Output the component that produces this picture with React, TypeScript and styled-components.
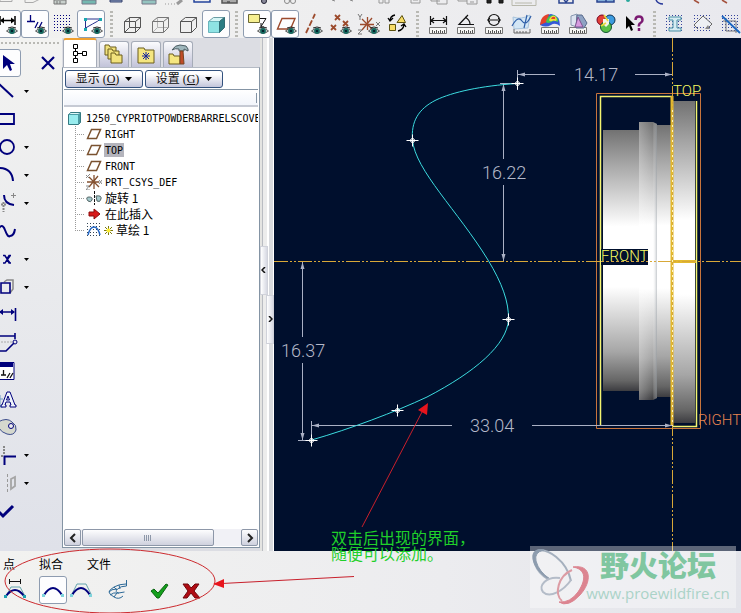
import React from 'react';
import styled, { createGlobalStyle, css } from 'styled-components';

const CJK = '"Noto Sans CJK SC", sans-serif';
const NAVY = '#000f2d';
const INK = '#00007c';

const GlobalStyle = createGlobalStyle`
  * { box-sizing: border-box; }
  body { margin: 0; font: 12px/16px "Liberation Sans", ${CJK}; color: #111; }
  button { font: inherit; color: inherit; margin: 0; padding: 0; border: 0; background: none; }
  svg { display: block; flex: none; }
`;

/* ---------- layout ---------- */

const Page = styled.div`
  position: relative;
  display: grid;
  grid-template-rows: auto 1fr auto;
  min-height: 100vh;
  overflow: hidden;
  background: #ededee;
`;

const Toolbars = styled.header`
  background: linear-gradient(90deg, #f2f2f0, #e9e9ee);
  overflow: hidden;
`;

const ClippedBar = styled.div`
  display: flex;
  align-items: flex-end;
  height: 6px;
  margin: 0 -9px 4px;
  overflow: hidden;
`;

const IconBar = styled.div`
  display: flex;
  height: 28px;
  margin-left: -7px;
`;

const IconButton = styled.button<{ $pressed?: boolean; $before?: number }>`
  display: flex;
  flex: none;
  align-items: center;
  justify-content: center;
  width: 28px;
  height: 28px;
  margin-left: ${(p) => p.$before || 0}px;
  border: 1px solid transparent;
  border-radius: 3px;
  ${(p) =>
    p.$pressed &&
    css`
      border-color: #8e9cb0;
      background: #fdfdfe;
    `}
`;

const Separator = styled.span`
  flex: none;
  width: 3px;
  height: 26px;
  margin: 1px 5px;
  background: repeating-linear-gradient(#b9b9b4 0 2px, transparent 2px 4px);
`;

const StubButton = styled.button<{ $before?: number }>`
  flex: none;
  width: 28px;
  height: 6px;
  margin-left: ${(p) => p.$before || 0}px;
`;

const Workspace = styled.main`
  display: flex;
  min-height: 0;
`;

const SketchTools = styled.nav`
  display: flex;
  flex: none;
  flex-direction: column;
  width: 62px;
  overflow: hidden;
  padding-top: 4px;
  background: linear-gradient(#f3f3f1, #dfe1e9);
`;

const Grip = styled.span`
  height: 2px;
  margin: 0 1px 5px;
  background: repeating-linear-gradient(90deg, #b9b9b4 0 2px, transparent 2px 4px);
`;

const ToolRow = styled.div`
  display: flex;
  align-items: center;
  height: 28px;
  margin-left: -7px;
`;

const FlyoutButton = styled.button`
  width: 11px;
  height: 28px;
  display: flex;
  align-items: center;
  justify-content: center;
`;

const CloseButton = styled(IconButton)`
  margin-left: 13px;
`;

const Navigator = styled.aside`
  display: flex;
  flex: none;
  flex-direction: column;
  width: 198px;
  padding: 0 0 3px;
  background: #dcdde3;
`;

const TabList = styled.div`
  display: flex;
  align-items: flex-end;
  gap: 2px;
  height: 29px;
  padding-left: 1px;
`;

const Tab = styled.button<{ $active?: boolean }>`
  display: flex;
  align-items: center;
  justify-content: center;
  width: ${(p) => (p.$active ? 34 : 30)}px;
  height: ${(p) => (p.$active ? 29 : 26)}px;
  border: 1px solid #a6acb8;
  border-bottom: 0;
  border-top: ${(p) => (p.$active ? '2px solid #f0a030' : '1px solid #a6acb8')};
  border-radius: 3px 3px 0 0;
  background: ${(p) => (p.$active ? '#fff' : 'linear-gradient(#fbfbfd, #c2c3d9)')};
`;

const TreePanel = styled.section`
  display: flex;
  flex: 1;
  flex-direction: column;
  min-height: 0;
  border: 1px solid #8494a4;
  border-top-color: #b4bac4;
  padding: 2px 1px 1px;
  background: #fff;
`;

const MenuRow = styled.div`
  display: flex;
  gap: 2px;
  padding: 0 1px 1px;
`;

const MenuButton = styled.button`
  display: flex;
  align-items: center;
  justify-content: center;
  gap: 6px;
  width: 78px;
  height: 18px;
  border: 1px solid #33527e;
  border-radius: 3px;
  background: linear-gradient(#fff 20%, #c3c5db);
  font-family: "Liberation Serif", ${CJK};
  line-height: 14px;
`;

const ColumnHeader = styled.div`
  display: flex;
  justify-content: flex-end;
  height: 18px;
  padding: 3px 1px 2px;
  border-top: 1px solid #8494a4;
  border-bottom: 2px solid #c6cad4;
  background: linear-gradient(#fff, #f2f5fb);
`;

const ColumnGrip = styled.span`
  width: 1px;
  background: #8494a4;
`;

const Tree = styled.div`
  flex: 1;
  padding: 3px 0 0 2px;
  overflow: hidden;
  white-space: nowrap;
`;

const TreeRoot = styled.div`
  display: flex;
  align-items: center;
  gap: 3px;
  height: 16px;
`;

const Branches = styled.ul`
  margin: 0 0 0 9px;
  padding: 0;
  list-style: none;
`;

const dotsV = 'repeating-linear-gradient(#9a9a9a 0 1px, transparent 1px 2px)';
const dotsH = 'repeating-linear-gradient(90deg, #9a9a9a 0 1px, transparent 1px 2px)';

const Branch = styled.li`
  display: flex;
  align-items: center;
  gap: 2px;
  height: 16px;
  padding-left: 11px;
  background: ${dotsV} 0 0 / 1px 100% no-repeat, ${dotsH} 0 8px / 10px 1px no-repeat;
  &:last-child {
    background: ${dotsV} 0 0 / 1px 50% no-repeat, ${dotsH} 0 8px / 10px 1px no-repeat;
  }
`;

const NodeName = styled.span<{ $selected?: boolean; $latin?: boolean }>`
  padding: ${(p) => (p.$latin ? '1px 1px 0' : '0 1px')};
  line-height: ${(p) => (p.$latin ? 13 : 14)}px;
  font-family: ${(p) => (p.$latin ? '"DejaVu Sans Mono", monospace' : CJK)};
  font-size: ${(p) => (p.$latin ? 10 : 12)}px;
  color: #000;
  background: ${(p) => (p.$selected ? '#b4b4bc' : 'none')};
`;

const ScrollBar = styled.div`
  display: flex;
  gap: 1px;
  height: 17px;
  background: #f1f1f6;
`;

const ScrollArrow = styled.button`
  display: flex;
  align-items: center;
  justify-content: center;
  width: 17px;
  border: 1px solid #8d97a8;
  border-radius: 2px;
  background: linear-gradient(#fdfdfe, #cfd1de);
`;

const ScrollThumb = styled.div`
  display: flex;
  align-items: center;
  justify-content: center;
  width: 132px;
  margin-right: auto;
  border: 1px solid #8d97a8;
  border-radius: 2px;
  background: linear-gradient(#fdfdfe, #cfd1de);
`;

const ThumbGrip = styled.span`
  width: 8px;
  height: 6px;
  background: repeating-linear-gradient(90deg, #8d97a8 0 1px, transparent 1px 2px);
`;

const Splitter = styled.div`
  display: flex;
  flex: none;
  flex-direction: column;
  justify-content: center;
  width: 14px;
  background: linear-gradient(90deg, #e4e4e2 0 2px, #b9bcc2 2px 3px, #ececec 3px 7px, #fff 7px 9px, #d8dade 9px 13px, #fff 13px);
`;

const CollapseButton = styled.button<{ $side: 'left' | 'right' }>`
  display: flex;
  align-items: center;
  justify-content: center;
  align-self: ${(p) => (p.$side === 'left' ? 'flex-start' : 'flex-end')};
  width: 8px;
  height: 49px;
  border: 1px solid #d0d2da;
  background: linear-gradient(90deg, #fff, #d6d8e2);
`;

const Viewport = styled.section`
  flex: 1;
  min-width: 0;
  background: ${NAVY};
  > svg { width: 100%; height: 100%; }
`;

const Dashboard = styled.footer`
  height: 62px;
  padding-top: 5px;
  background: linear-gradient(90deg, #f2f2f0, #ececef 60%, #e3e4ea);
`;

const Labels = styled.div`
  display: flex;
  gap: 24px;
  padding: 0 0 4px 3px;
  button { line-height: 16px; font-family: ${CJK}; color: #000; }
`;

const Commands = styled.div`
  display: flex;
`;

const Markup = styled.svg`
  position: absolute;
  left: 0;
  bottom: 0;
  pointer-events: none;
`;

const Note = styled.p`
  position: absolute;
  left: 331px;
  bottom: 52px;
  margin: 0;
  font: 16px/16px ${CJK};
  color: #1fd02a;
`;

const Watermark = styled.div`
  position: absolute;
  right: 5px;
  bottom: 5px;
  display: flex;
  width: 206px;
  height: 62px;
  background: rgba(255, 255, 255, 0.36);
`;

const WatermarkText = styled.div`
  flex: 1;
  margin-left: -6px;
  padding: 1px 4px 0 0;
  text-align: center;
  white-space: nowrap;
`;

const ForumName = styled.div`
  font: 900 29px/34px ${CJK};
  color: #80c6a0;
`;

const ForumLink = styled.a`
  display: block;
  font: 15px/24px "Open Sans", sans-serif;
  color: #abd3c8;
  text-decoration: none;
`;

/* ---------- icon parts ---------- */

const Icon = ({ children, size = 24 }: { children: React.ReactNode; size?: number }) => (
  <svg width={size} height={size} viewBox={`0 0 ${size} ${size}`} fill="none" aria-hidden="true">
    {children}
  </svg>
);

const Eye = ({ x = 18, y = 19 }) => (
  <g transform={`translate(${x} ${y})`}>
    <path d="M-5.500 0Q0-5 5.500 0Q0 4.500-5.500 0Z" fill="#cfd8d6" stroke="#333" strokeWidth=".8" />
    <circle r="2.900" fill="#15695f" />
    <circle r="1.100" fill="#012" />
    <path d="M-4-3Q0-5 4-3" stroke="#222" />
  </g>
);

const Ruler = () => (
  <g>
    <path d="M3.500 15.500h17v6h-17z" fill="#f8f8f6" stroke="#777" />
    <path d="M6.500 21v-3M8.500 21v-2M10.500 21v-3M12.500 21v-2M14.500 21v-3M16.500 21v-2M18.500 21v-3" stroke="#555" />
  </g>
);

const Dots = ({ step = 3, color = INK, from = 3, to = 20 }) => {
  const rows: number[] = [];
  for (let v = from; v <= to; v += step) rows.push(v);
  return (
    <g stroke={color} strokeDasharray={`1 ${step - 1}`}>
      {rows.map((v) => (
        <path key={v} d={`M${from} ${v + 0.5}H${to}`} />
      ))}
    </g>
  );
};

const Cross = ({ x, y, c = '#9c4a2c' }: { x: number; y: number; c?: string }) => (
  <path d={`M${x - 2} ${y - 2}l5 5m0-5l-5 5`} stroke={c} strokeWidth="1.800" />
);

const Down = () => (
  <svg width="7" height="4" viewBox="0 0 7 4" aria-hidden="true">
    <path d="M0 0h7L3.500 4z" fill="#000" />
  </svg>
);

const folder = 'M0 1h4l1 2h6v8H0z';

const I = {
  dims: (
    <Icon>
      <path d="M5 4v9M20 4v9M6 8.500h13" stroke="#000" strokeWidth="1.500" />
      <path d="M5 8.500l4-3v6zM20 8.500l-4-3v6z" fill="#000" />
      <Eye x={17} />
    </Icon>
  ),
  constraints: (
    <Icon>
      <path d="M4 9.500h8M7.500 3v6M12 16l3-6M16 16l3-6" stroke={INK} strokeWidth="1.300" />
      <Eye />
    </Icon>
  ),
  grid: (
    <Icon>
      <Dots />
      <Eye x={17} />
    </Icon>
  ),
  vertices: (
    <Icon>
      <path d="M6.500 7v9l7-4q6-3 8-5z" stroke="#26308c" />
      <path d="M5 6h3v3H5zM20 6h3v3h-3zM5 16h3v3H5z" fill="#1ba8b0" />
      <Eye />
    </Icon>
  ),
  wire: (
    <Icon>
      <path d="M4.500 9.500h11v11h-11zM9.500 5.500h11v10h-11zM4.500 9.500l5-4M15.500 9.500l5-4M4.500 20.500l5-5M15.500 20.500l5-5" stroke="#555" />
    </Icon>
  ),
  hidden: (
    <Icon>
      <path d="M9.500 5.500v10h11M4.500 20.500l5-5" stroke="#b5b5b5" />
      <path d="M4.500 9.500h11v11h-11zM4.500 9.500l5-4h11v10l-5 5M15.500 9.500l5-4" stroke="#777" />
    </Icon>
  ),
  noHidden: (
    <Icon>
      <path d="M4.500 9.500h11v11h-11zM4.500 9.500l5-4h11v10l-5 5M15.500 9.500l5-4" stroke="#555" />
    </Icon>
  ),
  shaded: (
    <Icon>
      <path d="M4.500 9.500l5-4h11l-5 4z" fill="#d5f5f5" stroke="#6a9ca4" />
      <path d="M4.500 9.500h11v11h-11z" fill="#8fe3e4" stroke="#6ab5bc" />
      <path d="M15.500 9.500l5-4v10l-5 5z" fill="#2b7d84" stroke="#316c74" />
    </Icon>
  ),
  noteDisplay: (
    <Icon>
      <path d="M3.500 2.500h11v8h-11z" fill="#f6ef90" stroke="#6c6834" />
      <path d="M15 6.500h6l-5 8M16 11v4h3" stroke="#111" />
      <Eye />
    </Icon>
  ),
  plane: (
    <Icon>
      <path d="M4.500 17L9 6.500h13L17.500 17z" stroke="#9c4a2c" strokeWidth="1.400" />
      <Eye />
    </Icon>
  ),
  axis: (
    <Icon>
      <path d="M5 21L14 2" stroke="#9c4a2c" strokeWidth="1.800" strokeDasharray="6 2" />
      <Eye x={16} />
    </Icon>
  ),
  points: (
    <Icon>
      <Cross x={8} y={5} />
      <Cross x={4} y={15} />
      <Cross x={16} y={11} />
      <Eye x={17} />
    </Icon>
  ),
  csys: (
    <Icon>
      <path d="M10.500 5v13M3 12.500h14M5 7l12 12M15 6L5 18" stroke="#9c4a2c" strokeWidth="1.300" />
      <path d="M1 2l2 3 2-3M3 5v3M19 10l4 4M23 10l-4 4M1 18h4l-4 4h4" stroke="#777" />
      <Eye x={17} />
    </Icon>
  ),
  rearrange: (
    <Icon>
      <path d="M12 10.500l5-7 3.500 7z" fill="#f7dc66" stroke="#5c5210" />
      <path d="M4.500 12.500h6v6h-6z" fill="#f7dc66" stroke="#5c5210" />
      <path d="M10 3Q5 4 5 9M3 6l2 3 3-3M13 19q5-1 6-6M16 14l3-2 2 3" stroke="#000" strokeWidth="1.300" />
    </Icon>
  ),
  distance: (
    <Icon>
      <path d="M4.500 4v9M20.500 4v9M5 8.500h15M8 6L5 8.500 8 11M17 6l3 2.500-3 2.500" stroke="#111" strokeWidth="1.200" />
      <Ruler />
    </Icon>
  ),
  angle: (
    <Icon>
      <path d="M14 3L5 12.500h15M11 5q5 3 5 7" stroke="#111" strokeWidth="1.200" />
      <Ruler />
    </Icon>
  ),
  diameter: (
    <Icon>
      <circle cx="12" cy="8" r="5.500" stroke="#111" strokeWidth="1.200" />
      <path d="M5 8h14M8 6L6 8l2 2M16 6l2 2-2 2" stroke="#111" />
      <Ruler />
    </Icon>
  ),
  curvature: (
    <Icon>
      <path d="M3 5q8 3 17-2l-2 13-14 1z" fill="#d3e6f5" stroke="#a9c4dc" />
      <path d="M2 14Q8 3 12 9t9-5M17 3l-3 13" stroke="#2f5fa8" strokeWidth="1.200" />
      <path d="M4 17v4h16v-4M7 21v-2M10 21v-2M13 21v-2M16 21v-2" stroke="#666" />
    </Icon>
  ),
  surface: (
    <Icon>
      <Ruler />
      <path d="M2 13Q4 3 13 2q9 1 9 12-5-4-9-1-5 3-11 0z" fill="#3558d8" />
      <path d="M3 8q2-5 8-6l-2 8-7 3z" fill="#e5432b" />
      <path d="M8 10q1-7 8-7 5 3 4 7-4-2-7 0-3 2-5 0z" fill="#42c653" />
      <path d="M11 8q2-5 6-4 3 3 1 5-3-1-4 0-2 1-3-1z" fill="#f4de3c" />
      <path d="M13 7q1-3 4-2 1 2-1 2z" fill="#e5432b" />
    </Icon>
  ),
  draft: (
    <Icon>
      <Ruler />
      <path d="M5 13V4l6-2v13z" fill="#dce3f0" stroke="#8797b0" />
      <path d="M11 3h5l5 8-3 5h-8z" fill="#8fa3c4" stroke="#586a8c" />
      <path d="M12 5l5 10H9z" fill="#d79be0" stroke="#7d5690" />
    </Icon>
  ),
  colors: (
    <Icon>
      <circle cx="8" cy="8" r="5" fill="#e24038" stroke="#702" />
      <circle cx="16" cy="8" r="5" fill="#3c9be0" stroke="#135" />
      <circle cx="12" cy="15" r="5.500" fill="#58bf48" stroke="#153" />
      <path d="M9 7h6v5l-3 3-3-3z" fill="#f4f4e8" />
      <path d="M10 3l4 6M7 14l5-3" stroke="#e9d83a" strokeWidth="1.500" />
    </Icon>
  ),
  help: (
    <Icon>
      <path d="M4 4v13l3-3 2 5 2-1-2-5h4z" fill="#000" />
      <path d="M13.500 8q0-3.500 3.500-3.500T20.500 8q0 2-2 3t-1.500 3.500M17 16v3" stroke="#7b1a72" strokeWidth="2.500" />
    </Icon>
  ),
  section: (
    <Icon>
      <Dots color="#34439c" />
      <path d="M6 5h12v3h-4v8h4v3H6v-3h4V8H6z" fill="#d6ecf2" stroke="#488fa5" />
    </Icon>
  ),
  rotate: (
    <Icon>
      <Dots color="#34439c" />
      <path d="M3 13l9-9 9 8-4 4M7 17l-4-4" stroke="#666" fill="#eef0f4" />
      <path d="M14 17l5 0-2-4z" fill="#888" />
    </Icon>
  ),
  clip: (
    <Icon>
      <Dots color="#34439c" />
      <path d="M7 6v13h13M4 9h13v12" stroke="#777" />
      <path d="M3 4l18 17" stroke="#1b66c0" strokeWidth="1.800" />
    </Icon>
  ),
};

const T = {
  select: <path d="M8 4v14l4-4 3 6 2-1-2-6h5z" fill={INK} />,
  line: <path d="M4 5l14 13" stroke={INK} strokeWidth="2" />,
  rect: <path d="M4 7h15v10H4z" stroke={INK} strokeWidth="1.800" />,
  circle: <circle cx="12" cy="12" r="7" stroke={INK} strokeWidth="1.800" />,
  arc: <path d="M4 5q13 0 14 13" stroke={INK} strokeWidth="2" />,
  fillet: (
    <>
      <path d="M9 4q0 9 10 10" stroke={INK} strokeWidth="2" />
      <path d="M8.500 11v10M3 13.500h8" stroke="#888" strokeDasharray="2 1" strokeWidth="2" />
      <path d="M18.500 2v5M16 4.500h5" stroke="#888" />
    </>
  ),
  spline: <path d="M3 11q4-8 7 0t5 6q4 0 5-7" stroke={INK} strokeWidth="2" />,
  point: <path d="M8 8.500h2l2 3 2-3h2M8 16h2l2-3.500 2 3.500h2M10 9l5 7M15 9l-5 7" stroke={INK} strokeWidth="1.300" />,
  edge: (
    <>
      <path d="M9 7l3-2h6v9l-3 4" stroke="#888" strokeWidth="1.500" />
      <path d="M6 8h9v10H6z" stroke={INK} strokeWidth="1.600" />
    </>
  ),
  dimension: (
    <>
      <path d="M4 9h15M20.500 5v13" stroke={INK} strokeWidth="1.600" />
      <path d="M20 9l-4-3v6zM4 9l4-3v6z" fill={INK} />
    </>
  ),
  modify: (
    <>
      <path d="M3 5h17M20 2v6M3 20h8l8-8" stroke={INK} strokeWidth="1.600" />
      <path d="M6 11h12" stroke="#aaa" strokeDasharray="2 1" />
      <circle cx="20" cy="11" r="2" stroke={INK} />
    </>
  ),
  constrain: (
    <>
      <path d="M4 3.500h15v17H4z" stroke={INK} fill="#fff" />
      <path d="M5 4h13v4H5z" fill={INK} />
      <path d="M6 16h5M8.500 11v5M12 19l3-5M15 19l3-5" stroke="#111" strokeWidth="1.300" />
    </>
  ),
  text: (
    <>
      <path d="M3 12h5M5 8v12M3 20h5" stroke="#6f9cc4" />
      <path d="M12 5h3l5 13h1v2h-6v-2h1l-1-3h-4l-1 3h1v2H6v-2h1zM13 9l-1.500 4h3z" fill="#eef3fb" stroke={INK} />
    </>
  ),
  palette: (
    <>
      <path d="M3 7q9-5 14 0 5 3 4 8-2 6-9 4-5-1-9-7z" fill="#d5d8ce" stroke="#3c4c8c" />
      <circle cx="16" cy="11" r="2.500" fill="#eee" stroke={INK} />
    </>
  ),
  trim: (
    <>
      <path d="M9 3v9M3 13h6" stroke="#888" strokeDasharray="2 1" strokeWidth="2" />
      <path d="M9.500 22v-8.500H21" stroke={INK} strokeWidth="2" />
    </>
  ),
  mirror: (
    <>
      <path d="M12.500 3v19" stroke="#999" strokeDasharray="3 2" />
      <path d="M16 8l4-2v9l-4 3z" stroke="#a5a5a5" strokeWidth="1.800" />
    </>
  ),
  done: <path d="M3 12l5 5L18 7" stroke={INK} strokeWidth="3" />,
};

const toolRows: [keyof typeof T, string, boolean][] = [
  ['line', 'Line', true],
  ['rect', 'Rectangle', false],
  ['circle', 'Circle', true],
  ['arc', 'Arc', true],
  ['fillet', 'Fillet', true],
  ['spline', 'Spline', false],
  ['point', 'Point', true],
  ['edge', 'Use edge', true],
  ['dimension', 'Dimension', false],
  ['modify', 'Modify', false],
  ['constrain', 'Constrain', false],
  ['text', 'Text', false],
  ['palette', 'Palette', false],
  ['trim', 'Trim', true],
  ['mirror', 'Mirror', true],
  ['done', 'Done', false],
];

const displayGroups: [keyof typeof I, boolean?][][] = [
  [['dims', true], ['constraints', true], ['grid'], ['vertices', true]],
  [['wire'], ['hidden'], ['noHidden'], ['shaded', true]],
  [['noteDisplay', true], ['plane', true], ['axis'], ['points'], ['csys'], ['rearrange']],
  [['distance'], ['angle'], ['diameter'], ['curvature'], ['surface'], ['draft'], ['colors'], ['help']],
  [['section'], ['rotate'], ['clip']],
];

/* Lower edges of the file and view buttons in the scrolled toolbar row. */
const stubs: { before?: number; art: React.ReactNode }[] = [
  { art: <path d="M9 0v1.500h12V0" stroke="#aaa" /> },
  { art: <path d="M6 0v2.500h8l6-3" stroke="#aaa" /> },
  { art: <path d="M7 0h12v4H7zM10 1v3M13 1v3" stroke="#777" fill="#c8d0cc" /> },
  { art: <path d="M7 0h14v4H7z" stroke="#778" fill="#74b8b0" /> },
  { art: <path d="M7 0h12v2H7z" stroke="#34406c" fill="#92a4c8" /> },
  { art: <path d="M11 0h14v4H11z" stroke="#778" fill="#94c4c0" /> },
  { art: <><path d="M6 4h10" stroke="#999" strokeDasharray="1 2" /><path d="M18 4l5-4" stroke="#999" strokeWidth="3" /></> },
  { art: <path d="M7 0v2h16V0" stroke="#23439c" strokeWidth="1.500" /> },
  { art: <path d="M7 0v3h15V0M12 2h3" stroke="#555" fill="#aaa" strokeWidth="1.500" /> },
  { before: 7, art: <circle cx="14" cy="1" r="2.500" stroke="#223" fill="#889" /> },
  { art: <><circle cx="9" cy="1" r="2.500" stroke="#888" /><circle cx="15" cy="1" r="2.500" stroke="#888" /></> },
  { before: 8, art: <path d="M18 0l3 1" stroke="#888" /> },
  { art: <path d="M8 0l3 1" stroke="#888" /> },
  { art: <path d="M9 0v3h4V0M15 0v3h4V0" stroke="#999" /> },
  { art: <path d="M13 0v3h9V0M15 0h5" stroke="#999" /> },
  { art: <path d="M5 0v1h9M11 0v4h10V0" stroke="#999" /> },
  { art: <path d="M4 0v1h9M13 0v4h10V0M16 2h4" stroke="#999" /> },
  { art: <path d="M5 0v3h4V0M17 0v3h4V0" stroke="#111" fill="#222" /> },
  { art: <path d="M2 0v5.500h24V0M5 3h17" stroke="#b8b8ac" /> },
  { before: 14, art: <path d="M7 0v3h14V0M12 0l2 2 2-2" stroke="#2b4490" strokeWidth="1.500" /> },
  { before: 12, art: <path d="M5 0v2h17V0M14 0v2" stroke="#2b4490" fill="#84aed8" strokeWidth="1.500" /> },
  { art: <circle cx="8" cy="0" r="2" fill="#28a89c" /> },
  { art: <path d="M8 0q2 4 7 4" stroke="#27389a" strokeWidth="1.500" /> },
  { art: <path d="M18 0l5 3" stroke="#a4503c" strokeWidth="1.500" /> },
  { art: <path d="M18 0l5 3" stroke="#a4503c" strokeWidth="1.500" /> },
];

const PlaneGlyph = () => (
  <Icon size={16}>
    <path d="M1.500 12.500l4-9h9l-4 9z" stroke="#7a5230" strokeWidth="1.500" />
  </Icon>
);

const treeItems: { name: string; latin?: boolean; selected?: boolean; glyph: React.ReactNode }[] = [
  { name: 'RIGHT', latin: true, glyph: <PlaneGlyph /> },
  { name: 'TOP', latin: true, selected: true, glyph: <PlaneGlyph /> },
  { name: 'FRONT', latin: true, glyph: <PlaneGlyph /> },
  {
    name: 'PRT_CSYS_DEF',
    latin: true,
    glyph: (
      <Icon size={16}>
        <path d="M8 1v14M1 8h12M3 3l10 10M12 2L3 13" stroke="#84502f" strokeWidth="1.300" />
        <path d="M0 1l3 3M0 4l4-4M13 6l3 4M16 6l-3 4M0 12h3l-3 4h4" stroke="#888" />
      </Icon>
    ),
  },
  {
    name: '旋转 1',
    glyph: (
      <Icon size={16}>
        <path d="M8.500 1v14" stroke="#111" strokeDasharray="3 1" />
        <path d="M2 11q-3-4 1-4t3 3-4 1zM10 6q6-1 5 3t-4 2z" fill="#a4c8cc" stroke="#566" />
      </Icon>
    ),
  },
  {
    name: '在此插入',
    glyph: (
      <Icon size={16}>
        <path d="M3 6h5V3l6 5-6 5v-3H3z" fill="#d81a1a" stroke="#8c0c0c" />
      </Icon>
    ),
  },
];

/* ---------- graphics area ---------- */

const Vertex = ({ x, y }: { x: number; y: number }) => (
  <g stroke="#fff" fill="none">
    <path d={`M${x - 6} ${y}h12M${x} ${y - 6}v12`} />
    <circle cx={x} cy={y} r="2" />
  </g>
);

const Arrow = ({ x, y, turn }: { x: number; y: number; turn: number }) => (
  <path d="M0 0l7-2v4z" fill="#aab0c4" transform={`translate(${x} ${y}) rotate(${turn})`} />
);

const Scene = () => (
  <svg viewBox="274 38 467 513" preserveAspectRatio="xMinYMin meet" role="img" aria-label="Sketch">
    <defs>
      <linearGradient id="metal" x2="0" y2="1">
        <stop offset="0" stopColor="#727272" />
        <stop offset=".12" stopColor="#a2a2a2" />
        <stop offset=".37" stopColor="#fff" />
        <stop offset=".6" stopColor="#fff" />
        <stop offset=".85" stopColor="#a6a6a6" />
        <stop offset=".96" stopColor="#666" />
        <stop offset="1" stopColor="#3c3c40" />
      </linearGradient>
      <linearGradient id="step">
        <stop offset="0" stopColor="#fff" stopOpacity=".25" />
        <stop offset=".75" stopColor="#fff" stopOpacity="0" />
        <stop offset="1" stopColor="#8a929a" stopOpacity=".5" />
      </linearGradient>
    </defs>

    <path d="M603 130h36v261h-36z" fill="url(#metal)" />
    <path d="M639 122h14l4 2v274l-4 2h-14z" fill="url(#metal)" />
    <path d="M639 122h14l4 2v274l-4 2h-14z" fill="url(#step)" />
    <path d="M657 125h15v272h-15z" fill="url(#metal)" />
    <path d="M673 101h22v322h-22z" fill="url(#metal)" />

    <path d="M596.500 93.500h104v335h-104z" fill="none" stroke="#c8743c" />
    <path d="M672 96.500h-71.500v329M672 426.500h24.500V101" fill="none" stroke="#f4f470" strokeWidth="1.500" />
    <path d="M672 96v330M672 261.500h24" stroke="#e3b92e" strokeWidth="3" />
    <path d="M274 261.500h467M672.500 38v513" stroke="#d8a838" strokeDasharray="14 2 2 2 2 2" />
    <path d="M672.500 110v316" stroke="#fff6c0" strokeDasharray="2 3" />
    <path d="M601 249h47v16h-47z" fill={NAVY} />
    <path d="M601 261.500h47" stroke="#d0a240" strokeDasharray="3 2" />

    <g stroke="#aab0c4">
      <path d="M518 74.500h37M635 74.500h37M517.500 70v20" />
      <path d="M503.500 84v75M503.500 185v76M500 83.500h13" />
      <path d="M302.500 262v75M302.500 363v77M298 440.500h13" />
      <path d="M312 425.500h140M532 425.500h140M311.500 421v16" />
    </g>
    <Arrow x={518} y={74.5} turn={0} />
    <Arrow x={672} y={74.5} turn={180} />
    <Arrow x={503.5} y={84} turn={90} />
    <Arrow x={503.5} y={261} turn={270} />
    <Arrow x={302.5} y={262} turn={90} />
    <Arrow x={302.5} y={440} turn={270} />
    <Arrow x={312} y={425.5} turn={0} />
    <Arrow x={672} y={425.5} turn={180} />

    <path
      d="M517 83.500C480 86 453 92 436 100C418 109 411 122 412.500 140C415 170 458 211 488 260C502 283 509 302 508.500 319.500C507 345 475 372 427 397C395 412 350 429 311.500 440"
      fill="none"
      stroke="#3cdce0"
    />
    <Vertex x={517.5} y={83.5} />
    <Vertex x={412.5} y={140.5} />
    <Vertex x={508.5} y={319.5} />
    <Vertex x={397.5} y={410.5} />
    <Vertex x={311.5} y={440.5} />

    <g fontFamily="Roboto, sans-serif" fontWeight="300" fontSize="18" fill="#b4b8c8">
      <text x="574" y="81">14.17</text>
      <text x="482" y="179">16.22</text>
      <text x="281" y="357">16.37</text>
      <text x="470" y="432">33.04</text>
    </g>
    <g fontFamily="Roboto, sans-serif" fontWeight="300" fontSize="15" fill="#f8fa60">
      <text x="673" y="96">TOP</text>
      <text x="601" y="261">FRONT</text>
      <text x="698" y="425" fill="#e88450">RIGHT</text>
    </g>
  </svg>
);

const Logo = () => (
  <svg width="60" height="62" viewBox="0 0 60 62" fill="none" aria-hidden="true">
    <path d="M41 35C37 15 17 1 7 5C0 10 5 26 18 33" stroke="#a5b0be" strokeWidth="2" />
    <path d="M14 4C4 2 0 8 5 19Q10 29 20 33Q9 26 6 15Q4 6 14 4Z" fill="#8d9cae" stroke="#8d9cae" />
    <path d="M30 32C16 30 8 40 13 46C20 53 34 44 41 34" stroke="#b4bcc8" strokeWidth="2" />
    <path d="M42 24C28 30 24 48 32 55" stroke="#dc9ca4" strokeWidth="2" />
    <path d="M43 21C62 18 62 36 50 49Q38 62 29 56Q40 57 48 46C58 31 54 23 43 21Z" fill="#dc8490" stroke="#dc8490" />
  </svg>
);

export default function App() {
  return (
    <Page>
      <GlobalStyle />
      <Toolbars>
        <ClippedBar>
          {stubs.map((s, i) => (
            <StubButton key={i} $before={s.before} aria-label={`View command ${i + 1}`}>
              <svg width="28" height="6" viewBox="0 0 28 6" fill="none">{s.art}</svg>
            </StubButton>
          ))}
        </ClippedBar>
        <IconBar>
          {displayGroups.map((group, g) => (
            <React.Fragment key={g}>
              {g > 0 && <Separator />}
              {group.map(([name, pressed]) => (
                <IconButton key={name} $pressed={pressed} aria-label={name} aria-pressed={!!pressed}>
                  {I[name]}
                </IconButton>
              ))}
            </React.Fragment>
          ))}
        </IconBar>
      </Toolbars>

      <Workspace>
        <SketchTools>
          <Grip />
          <ToolRow>
            <IconButton $pressed aria-label="Select"><Icon>{T.select}</Icon></IconButton>
            <CloseButton aria-label="Close">
              <Icon><path d="M6 6l12 12M18 6L6 18" stroke={INK} strokeWidth="2.200" /></Icon>
            </CloseButton>
          </ToolRow>
          {toolRows.map(([name, label, more]) => (
            <ToolRow key={name}>
              <IconButton aria-label={label}><Icon>{T[name]}</Icon></IconButton>
              {more && (
                <FlyoutButton aria-label={`${label} options`}>
                  <svg width="5" height="3" viewBox="0 0 5 3"><path d="M0 0h5L2.500 3z" fill="#000" /></svg>
                </FlyoutButton>
              )}
            </ToolRow>
          ))}
        </SketchTools>

        <Navigator>
          <TabList role="tablist">
            <Tab $active role="tab" aria-selected="true" aria-label="Model tree">
              <Icon>
                <path d="M5.500 2.500h4v4h-4zM5.500 9.500h4v4h-4zM5.500 16.500h4v4h-4zM14.500 9.500h4v4h-4zM7.500 7v2M7.500 14v2M10 11.500h4" stroke="#000" />
              </Icon>
            </Tab>
            <Tab role="tab" aria-selected="false" aria-label="Layers">
              <Icon>
                <g fill="#f2e27c" stroke="#6b5c1c">
                  <path transform="translate(3 1)" d={folder} />
                  <path transform="translate(6 5)" d={folder} />
                  <path transform="translate(9 9)" d={folder} />
                </g>
              </Icon>
            </Tab>
            <Tab role="tab" aria-selected="false" aria-label="Favorites">
              <Icon>
                <path d="M4 5h6l1 2h9v13H4z" fill="#f5e680" stroke="#6b5c1c" />
                <path d="M12 9v8M8 13h8M9 10l6 6M15 10l-6 6" stroke="#15259c" />
              </Icon>
            </Tab>
            <Tab role="tab" aria-selected="false" aria-label="Tools">
              <Icon>
                <path d="M3 11h4l1 2h6v8H3z" fill="#f5e680" stroke="#6b5c1c" />
                <path d="M6 7q3-5 8-5l6 1 2 3v2l-4-2v2h-5V6Q9 5 6 7z" fill="#9eb6bc" stroke="#4c5c62" />
                <path d="M14 8h3l1 13h-4z" fill="#c14b28" stroke="#742" />
              </Icon>
            </Tab>
          </TabList>
          <TreePanel>
            <MenuRow>
              <MenuButton><span>显示 (<u>O</u>)</span><Down /></MenuButton>
              <MenuButton><span>设置 (<u>G</u>)</span><Down /></MenuButton>
            </MenuRow>
            <ColumnHeader><ColumnGrip /></ColumnHeader>
            <Tree>
              <TreeRoot>
                <Icon size={16}>
                  <path d="M2.500 4.500l2-2h10v10l-2 2h-10z" fill="#4b9ca4" stroke="#357a82" />
                  <path d="M3 5h9v9H3z" fill="#98ecee" />
                  <path d="M3 4l2-1h9l-2 1z" fill="#dff8f8" />
                </Icon>
                <NodeName $latin>1250_CYPRIOTPOWDERBARRELSCOVE</NodeName>
              </TreeRoot>
              <Branches>
                {treeItems.map((item) => (
                  <Branch key={item.name}>
                    {item.glyph}
                    <NodeName $latin={item.latin} $selected={item.selected}>{item.name}</NodeName>
                  </Branch>
                ))}
                <Branch>
                  <Icon size={16}>
                    <Dots color="#345" from={1} to={16} />
                    <path d="M2 13Q4 5 8 5t6 8" stroke="#2366c4" strokeWidth="1.500" />
                  </Icon>
                  <Icon size={9}>
                    <path d="M4.500 0v9M0 4.500h9M1 1l7 7M8 1L1 8" stroke="#7d7a10" />
                    <circle cx="4.500" cy="4.500" r="2" fill="#ffef30" />
                  </Icon>
                  <NodeName>草绘 1</NodeName>
                </Branch>
              </Branches>
            </Tree>
            <ScrollBar>
              <ScrollArrow aria-label="Scroll left">
                <Icon size={10}><path d="M7 1L3 5l4 4" stroke="#222" strokeWidth="2" /></Icon>
              </ScrollArrow>
              <ScrollThumb><ThumbGrip /></ScrollThumb>
              <ScrollArrow aria-label="Scroll right">
                <Icon size={10}><path d="M3 1l4 4-4 4" stroke="#222" strokeWidth="2" /></Icon>
              </ScrollArrow>
            </ScrollBar>
          </TreePanel>
        </Navigator>

        <Splitter>
          <CollapseButton $side="left" aria-label="Collapse navigator">
            <Icon size={6}><path d="M4 0L1 3l3 3" stroke="#111" strokeWidth="1.500" /></Icon>
          </CollapseButton>
          <CollapseButton $side="right" aria-label="Expand navigator">
            <Icon size={6}><path d="M2 0l3 3-3 3" stroke="#111" strokeWidth="1.500" /></Icon>
          </CollapseButton>
        </Splitter>

        <Viewport><Scene /></Viewport>
      </Workspace>

      <Dashboard>
        <Labels>
          <button>点</button>
          <button>拟合</button>
          <button>文件</button>
        </Labels>
        <Commands>
          <IconButton $before={1} aria-label="Dimension control polygon">
            <Icon>
              <path d="M6.500 1v5M17.500 1v5M7 3.500h10" stroke="#111" />
              <path d="M3 18l5-9h9l5 9" stroke="#64a4ac" />
              <path d="M3 18q9-12 18 0" stroke={INK} strokeWidth="2" />
              <path d="M1 17h3v3H1zM20 17h3v3h-3z" fill="#20a0b0" />
            </Icon>
          </IconButton>
          <IconButton $before={10} $pressed aria-label="Interpolation points">
            <Icon>
              <path d="M3 17q9-14 18 0" stroke={INK} strokeWidth="2.200" />
              <path d="M1 16h3v3H1zM20 16h3v3h-3z" fill="#7fd4dc" />
            </Icon>
          </IconButton>
          <IconButton aria-label="Control points">
            <Icon>
              <path d="M3 16l5-10h9l5 10" stroke="#64a4ac" />
              <path d="M3 17q9-14 18 0" stroke={INK} strokeWidth="2.200" />
              <path d="M1 16h3v3H1zM20 16h3v3h-3z" fill="#7fd4dc" />
            </Icon>
          </IconButton>
          <IconButton $before={9} aria-label="Curvature analysis">
            <Icon>
              <path d="M20.500 2v6q-6 0-9 3t1 4l6-1M20 6q-7 0-12 3T3 14t5 5 9-1M3 14q2-3 8-3M4 17q3-3 9-2M8 9l3 3M13 7l1 4M8 19l3-4" stroke="#2d6a98" />
            </Icon>
          </IconButton>
          <IconButton $before={13} aria-label="Accept">
            <Icon><path d="M4 13l3-2 4 4 8-9 2 1-9 13h-2z" fill="#14a01c" stroke="#0a6410" /></Icon>
          </IconButton>
          <IconButton $before={4} aria-label="Cancel">
            <Icon><path d="M4 6h5l3 4 4-4h4l-5 7 6 7h-5l-4-5-4 5H4l5-7z" fill="#b00c14" stroke="#70060c" /></Icon>
          </IconButton>
        </Commands>
      </Dashboard>

      <Markup width="741" height="613" viewBox="0 0 741 613" fill="none" aria-hidden="true">
        <ellipse cx="110" cy="581" rx="105" ry="32" stroke="#cc2a2e" />
        <path d="M354 576.500L222 583.500M362 527L422 412" stroke="#c8202c" />
        <path d="M213 584l11-5v9zM428 403l-1 12-9-5z" fill="#e8141c" />
      </Markup>
      <Note>双击后出现的界面，<br />随便可以添加。</Note>
      <Watermark>
        <Logo />
        <WatermarkText>
          <ForumName>野火论坛</ForumName>
          <ForumLink href="#forum">www.proewildfire.cn</ForumLink>
        </WatermarkText>
      </Watermark>
    </Page>
  );
}
